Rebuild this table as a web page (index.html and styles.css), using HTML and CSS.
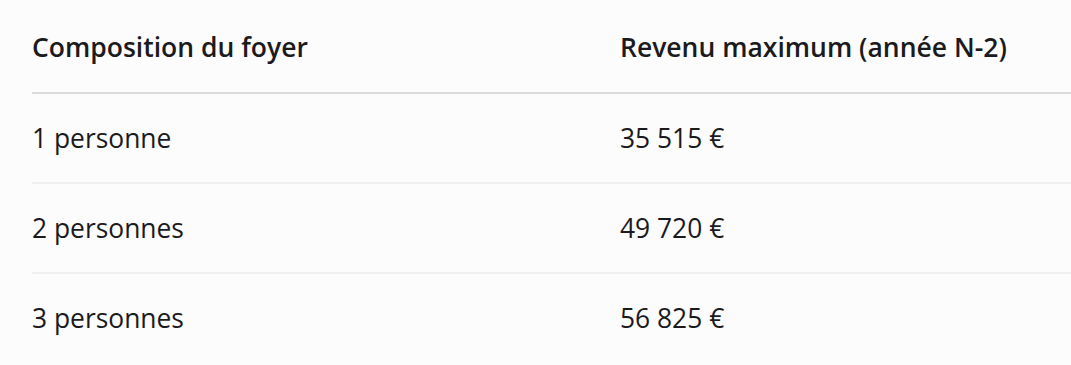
FILE: index.html
```html
<!DOCTYPE html>
<html lang="fr">
<head>
<meta charset="utf-8">
<title>Plafonds de revenus</title>
<link rel="stylesheet" href="styles.css">
</head>
<body>
<div class="wrap">
  <table class="income">
    <thead>
      <tr>
        <th class="col-a">Composition du foyer</th>
        <th>Revenu maximum (année N-2)</th>
      </tr>
    </thead>
    <tbody>
      <tr><td>1 personne</td><td>35 515 €</td></tr>
      <tr><td>2 personnes</td><td>49 720 €</td></tr>
      <tr><td>3 personnes</td><td>56 825 €</td></tr>
    </tbody>
  </table>
</div>
</body>
</html>
```
FILE: styles.css
```css
html, body {
  margin: 0;
  padding: 0;
  background: #fdfcfd;
}
body {
  font-family: "Open Sans", "Noto Sans", sans-serif;
  color: #1b1a1c;
  overflow: hidden;
}
.wrap {
  padding-left: 32px;
}
.income {
  width: 1039px;
  border-collapse: collapse;
  table-layout: fixed;
}
.income th,
.income td {
  text-align: left;
  padding: 0;
  vertical-align: middle;
}
.income th {
  font-size: 26.5px;
  font-weight: 600;
  height: 90px;
  padding-top: 2px;
  border-bottom: 2px solid #dcdbdc;
}
.income th.col-a {
  width: 588px;
}
.income td {
  font-size: 26.4px;
  font-weight: 400;
  height: 88px;
  border-bottom: 2px solid #f1f0f1;
}
.income tbody tr:last-child td {
  border-bottom: none;
}
```
